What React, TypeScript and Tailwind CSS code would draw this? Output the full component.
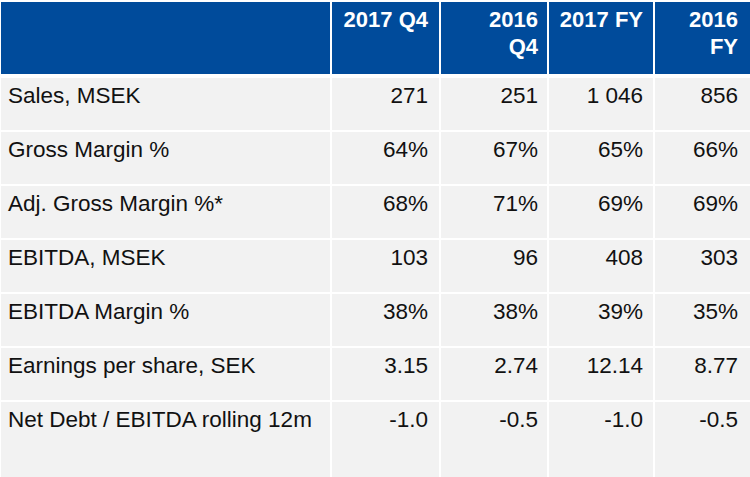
import React from "react";

const cols = "grid grid-cols-[329px_107px_106px_104px_95px] gap-x-[2px]";

const rows: [string, string, string, string, string][] = [
  ["Sales, MSEK", "271", "251", "1 046", "856"],
  ["Gross Margin %", "64%", "67%", "65%", "66%"],
  ["Adj. Gross Margin %*", "68%", "71%", "69%", "69%"],
  ["EBITDA, MSEK", "103", "96", "408", "303"],
  ["EBITDA Margin %", "38%", "38%", "39%", "35%"],
  ["Earnings per share, SEK", "3.15", "2.74", "12.14", "8.77"],
  ["Net Debt / EBITDA rolling 12m", "-1.0", "-0.5", "-1.0", "-0.5"],
];

const pr = ["pr-[11px]", "pr-[9px]", "pr-[10px]", "pr-[12px]"];

export default function App() {
  return (
    <div
      className="w-[750px] h-[477px] overflow-hidden bg-white pt-[2px] pl-[1px] flex flex-col gap-y-[2px]"
      style={{ fontFamily: '"Liberation Sans", Arial, sans-serif' }}
    >
      <div className={`${cols} h-[72px] mb-[2px]`}>
        <div className="bg-[#004b9b]" />
        <div className="bg-[#004b9b] text-white font-bold text-[22px] leading-[27px] text-right pt-[4px] pr-[11px]">
          2017 Q4
        </div>
        <div className="bg-[#004b9b] text-white font-bold text-[22px] leading-[27px] text-right pt-[4px] pr-[9px]">
          2016
          <br />
          Q4
        </div>
        <div className="bg-[#004b9b] text-white font-bold text-[22px] leading-[27px] text-right pt-[4px] pr-[10px]">
          2017 FY
        </div>
        <div className="bg-[#004b9b] text-white font-bold text-[22px] leading-[27px] text-right pt-[4px] pr-[12px]">
          2016
          <br />
          FY
        </div>
      </div>
      {rows.map((r, i) => (
        <div
          key={i}
          className={`${cols} ${i === rows.length - 1 ? "h-[75px]" : "h-[52px]"} shrink-0`}
        >
          <div className="bg-[#f2f2f2] text-[#111] text-[22.5px] leading-[28px] pt-[4px] pl-[7px] whitespace-nowrap">
            {r[0]}
          </div>
          {r.slice(1).map((v, j) => (
            <div
              key={j}
              className={`bg-[#f2f2f2] text-[#111] text-[22.5px] leading-[28px] pt-[4px] text-right whitespace-nowrap ${pr[j]}`}
            >
              {v}
            </div>
          ))}
        </div>
      ))}
    </div>
  );
}
